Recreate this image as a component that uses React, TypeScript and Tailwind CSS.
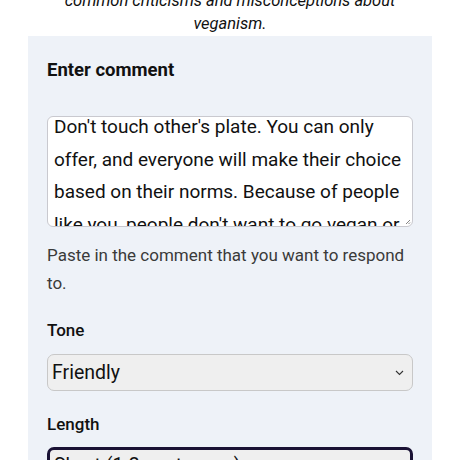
import React from "react";

export default function App() {
  const comment =
    "Don't touch other's plate. You can only offer, and everyone will make their choice based on their norms. Because of people like you, people don't want to go vegan or vegetarian.";
  return (
    <div className="w-[460px] h-[460px] overflow-hidden bg-white font-['Roboto',sans-serif] text-black">
      <p className="mt-[-11px] text-center italic text-[16.5px] leading-[23px] text-[#111] px-[40px]">
        common criticisms and misconceptions about veganism.
      </p>
      <div className="mx-[28px] mt-[1px] bg-[#eef2f8] px-[19px] pt-[22px] pb-[20px]">
        <h2 className="text-[18.5px] leading-[24px] font-bold text-[#111]">Enter comment</h2>
        <div className="relative mt-[34px] h-[111px] overflow-hidden bg-white border border-[#c9c9cf] rounded-[6px] px-[6px]">
          <p className="mt-[-6px] text-[19px] leading-[32.5px] text-[#111]">{comment}</p>
          <svg className="absolute right-[1px] bottom-[1px]" width="6" height="6" viewBox="0 0 6 6">
            <path d="M5 1 L1 5 M5 3.5 L3.5 5" stroke="#777" strokeWidth="0.9" />
          </svg>
        </div>
        <p className="mt-[14px] text-[17px] leading-[28px] text-[#3a3a3a]">
          Paste in the comment that you want to respond to.
        </p>
        <div className="mt-[21px] text-[17px] leading-[24px] font-medium text-[#111]">Tone</div>
        <div className="mt-[12px] h-[37px] flex items-center justify-between bg-[#efefef] border border-[#c8c8c8] rounded-[7px] pl-[4px] pr-[8px]">
          <span className="text-[19.5px] text-[#111]">Friendly</span>
          <svg width="9" height="6" viewBox="0 0 9 6" fill="none">
            <path d="M1 1 L4.5 4.5 L8 1" stroke="#333" strokeWidth="1.1" />
          </svg>
        </div>
        <div className="mt-[21px] text-[17px] leading-[24px] font-medium text-[#111]">Length</div>
        <div className="mt-[11px] h-[37px] flex items-center bg-[#efefef] border-[3px] border-[#1a1235] rounded-[7px] pl-[4px]">
          <span className="text-[19.5px] text-[#111]">Short (1-2 sentences)</span>
        </div>
      </div>
    </div>
  );
}
